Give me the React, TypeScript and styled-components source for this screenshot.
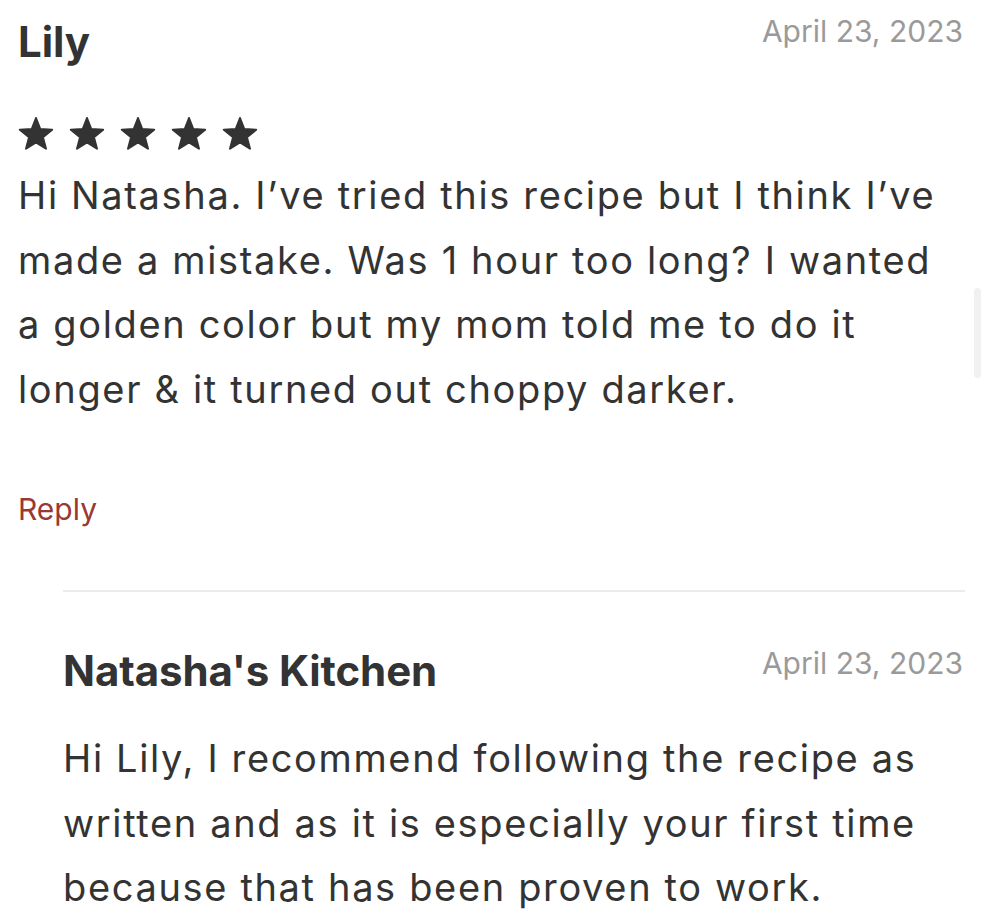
import React from "react";
import styled, { createGlobalStyle } from "styled-components";

const Global = createGlobalStyle`
  html, body { margin: 0; padding: 0; background: #ffffff; }
  body { font-family: Inter, "Noto Sans", "Liberation Sans", sans-serif; color: #333333; }
`;

const Page = styled.main`
  position: relative;
  box-sizing: border-box;
  width: 986px;
  min-height: 924px;
  padding: 13px 23px 0 18px;
  overflow: hidden;
`;

const Comment = styled.article`
  display: flex;
  flex-direction: column;
`;

const Header = styled.header`
  display: flex;
  justify-content: space-between;
  align-items: flex-start;
`;

const Name = styled.h3<{ $lh: number }>`
  margin: 0;
  font-size: 42px;
  line-height: ${(p) => p.$lh}px;
  font-weight: 700;
  color: #333333;
  letter-spacing: -0.1px;
`;

const DateText = styled.time`
  font-size: 30px;
  line-height: 36px;
  color: #9a9a9a;
`;

const Stars = styled.div`
  display: flex;
  gap: 15px;
  margin-top: 46px;
`;

const Body = styled.p<{ $top: number }>`
  margin: ${(p) => p.$top}px 0 0;
  padding-right: 8px;
  font-size: 38px;
  line-height: 64.5px;
  font-weight: 400;
  letter-spacing: 1.65px;
  color: #333333;
`;

const ReplyLink = styled.a`
  margin-top: 70px;
  font-size: 30px;
  line-height: 36px;
  color: #9b3832;
  text-decoration: none;
  align-self: flex-start;
`;

const Children = styled.section`
  margin-top: 63px;
  margin-left: 45px;
  margin-right: -2px;
  border-top: 2px solid #ececec;
  padding-top: 53px;
  padding-right: 2px;
`;

const Scrollbar = styled.div`
  position: absolute;
  right: 5px;
  top: 288px;
  width: 7px;
  height: 90px;
  border-radius: 4px;
  background: #f1f1f1;
`;

const Star = () => (
  <svg width="36" height="33" viewBox="0 0 36 33" aria-hidden="true">
    <polygon
      points="18,1 22.29,12.09 34.17,12.75 24.94,20.26 27.99,31.75 18,25.3 8.01,31.75 11.06,20.26 1.83,12.75 13.71,12.09"
      fill="#333333"
      stroke="#333333"
      strokeWidth="2"
      strokeLinejoin="round"
    />
  </svg>
);

export default function App() {
  return (
    <>
      <Global />
      <Page>
        <Comment>
          <Header>
            <Name $lh={58}>Lily</Name>
            <DateText>April 23, 2023</DateText>
          </Header>
          <Stars>
            {[0, 1, 2, 3, 4].map((i) => (
              <Star key={i} />
            ))}
          </Stars>
          <Body $top={13}>
            Hi Natasha. I’ve tried this recipe but I think I’ve made a mistake. Was 1 hour too long? I wanted a
            golden color but my mom told me to do it longer &amp; it turned out choppy darker.
          </Body>
          <ReplyLink href="#">Reply</ReplyLink>
          <Children>
            <Comment>
              <Header>
                <Name $lh={52}>Natasha's Kitchen</Name>
                <DateText>April 23, 2023</DateText>
              </Header>
              <Body $top={29}>
                Hi Lily, I recommend following the recipe as written and as it is especially your first time
                because that has been proven to work.
              </Body>
            </Comment>
          </Children>
        </Comment>
        <Scrollbar />
      </Page>
    </>
  );
}
